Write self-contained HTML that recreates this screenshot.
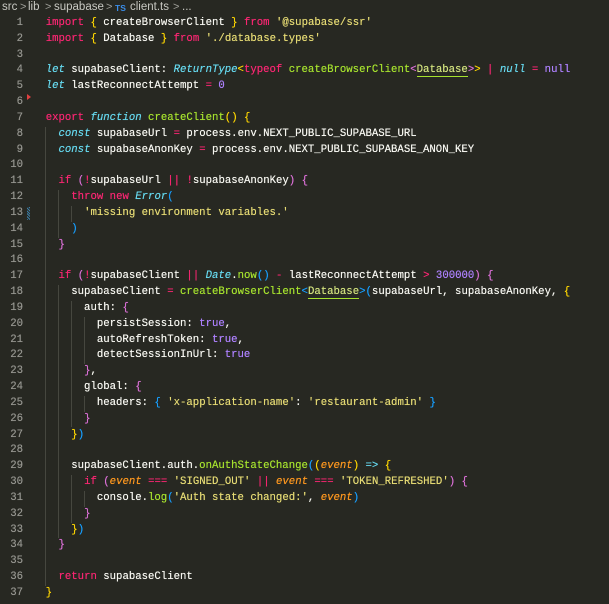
<!DOCTYPE html>
<html><head><meta charset="utf-8">
<style>
html,body{margin:0;padding:0;background:#272822;width:609px;height:604px;overflow:hidden}
.bc{position:absolute;top:0;height:16px;line-height:15px;font-family:"Liberation Sans",sans-serif;font-size:11.5px;color:#c8c8c2;white-space:pre}
.bc.ch{color:#a0a09a;font-size:11px}
.bc.ts{color:#3b8eea;font-weight:bold;font-size:8.5px;line-height:16px}
#code{position:absolute;left:0;top:16px;font-family:"Liberation Mono",monospace;font-size:10.67px;line-height:15.83px;color:#f8f8f2;text-shadow:0 0 0.4px currentColor}
.l{position:relative;height:15.83px;white-space:pre}
.n{position:absolute;left:0;width:23px;text-align:right;color:#95958f}
.c{position:absolute;left:45.7px}
.g{position:absolute;width:1px;background:#46473f}
.k{color:#f92672}.t{color:#66d9ef;font-style:italic}.f{color:#a6e22e}.s{color:#e6db74}.p{color:#ae81ff}.o{color:#fd971f;font-style:italic}
.b1{color:#ffd700}.b2{color:#da70d6}.b3{color:#179fff}
.u{color:#d2e27e;border-bottom:1px solid #a6e22e}
.cy{color:#66d9ef}
</style></head><body>
<div class="bc" style="left:2px">src</div>
<div class="bc ch" style="left:20px">&gt;</div>
<div class="bc" style="left:28px">lib</div>
<div class="bc ch" style="left:45px">&gt;</div>
<div class="bc" style="left:54px">supabase</div>
<div class="bc ch" style="left:106px">&gt;</div>
<div class="bc ts" style="left:115px">TS</div>
<div class="bc" style="left:130px">client.ts</div>
<div class="bc ch" style="left:173px">&gt;</div>
<div class="bc" style="left:182px">...</div>
<div class="g" style="left:45px;top:126.8px;height:458.9px"></div>
<div class="g" style="left:58px;top:190.1px;height:47.5px"></div>
<div class="g" style="left:58px;top:285.1px;height:253.3px"></div>
<div class="g" style="left:71px;top:206px;height:15.8px"></div>
<div class="g" style="left:71px;top:300.9px;height:126.6px"></div>
<div class="g" style="left:71px;top:475px;height:47.5px"></div>
<div class="g" style="left:84px;top:316.7px;height:47.5px"></div>
<div class="g" style="left:84px;top:396px;height:15.8px"></div>
<div class="g" style="left:84px;top:490.8px;height:15.8px"></div>
<div style="position:absolute;left:27px;top:94px;width:0;height:0;border-top:3px solid transparent;border-bottom:3px solid transparent;border-left:4px solid #e04040"></div>
<div style="position:absolute;left:27px;top:207px;width:3px;height:13px;background:repeating-linear-gradient(45deg,#3a7ca5 0 1px,#272822 1px 2px)"></div>
<div id="code">
<div class="l"><span class="n">1</span><span class="c"><span class="k">import</span> <span class="b1">{</span> createBrowserClient <span class="b1">}</span> <span class="k">from</span> <span class="s">'@supabase/ssr'</span></span></div>
<div class="l"><span class="n">2</span><span class="c"><span class="k">import</span> <span class="b1">{</span> Database <span class="b1">}</span> <span class="k">from</span> <span class="s">'./database.types'</span></span></div>
<div class="l"><span class="n">3</span></div>
<div class="l"><span class="n">4</span><span class="c"><span class="t">let</span> supabaseClient: <span class="t">ReturnType</span><span class="b1">&lt;</span><span class="k">typeof</span> <span class="f">createBrowserClient</span><span class="b2">&lt;</span><span class="u">Database</span><span class="b2">&gt;</span><span class="b1">&gt;</span> <span class="k">|</span> <span class="t">null</span> <span class="k">=</span> <span class="p">null</span></span></div>
<div class="l"><span class="n">5</span><span class="c"><span class="t">let</span> lastReconnectAttempt <span class="k">=</span> <span class="p">0</span></span></div>
<div class="l"><span class="n">6</span></div>
<div class="l"><span class="n">7</span><span class="c"><span class="k">export</span> <span class="t">function</span> <span class="f">createClient</span><span class="b1">()</span> <span class="b1">{</span></span></div>
<div class="l"><span class="n">8</span><span class="c">  <span class="t">const</span> supabaseUrl <span class="k">=</span> process.env.NEXT_PUBLIC_SUPABASE_URL</span></div>
<div class="l"><span class="n">9</span><span class="c">  <span class="t">const</span> supabaseAnonKey <span class="k">=</span> process.env.NEXT_PUBLIC_SUPABASE_ANON_KEY</span></div>
<div class="l"><span class="n">10</span></div>
<div class="l"><span class="n">11</span><span class="c">  <span class="k">if</span> <span class="b2">(</span><span class="k">!</span>supabaseUrl <span class="k">||</span> <span class="k">!</span>supabaseAnonKey<span class="b2">)</span> <span class="b2">{</span></span></div>
<div class="l"><span class="n">12</span><span class="c">    <span class="k">throw</span> <span class="k">new</span> <span class="t">Error</span><span class="b3">(</span></span></div>
<div class="l"><span class="n">13</span><span class="c">      <span class="s">'missing environment variables.'</span></span></div>
<div class="l"><span class="n">14</span><span class="c">    <span class="b3">)</span></span></div>
<div class="l"><span class="n">15</span><span class="c">  <span class="b2">}</span></span></div>
<div class="l"><span class="n">16</span></div>
<div class="l"><span class="n">17</span><span class="c">  <span class="k">if</span> <span class="b2">(</span><span class="k">!</span>supabaseClient <span class="k">||</span> <span class="t">Date</span>.<span class="f">now</span><span class="b3">()</span> <span class="k">-</span> lastReconnectAttempt <span class="k">&gt;</span> <span class="p">300000</span><span class="b2">)</span> <span class="b2">{</span></span></div>
<div class="l"><span class="n">18</span><span class="c">    supabaseClient <span class="k">=</span> <span class="f">createBrowserClient</span><span class="b3">&lt;</span><span class="u">Database</span><span class="b3">&gt;</span><span class="b3">(</span>supabaseUrl, supabaseAnonKey, <span class="b1">{</span></span></div>
<div class="l"><span class="n">19</span><span class="c">      auth: <span class="b2">{</span></span></div>
<div class="l"><span class="n">20</span><span class="c">        persistSession: <span class="p">true</span>,</span></div>
<div class="l"><span class="n">21</span><span class="c">        autoRefreshToken: <span class="p">true</span>,</span></div>
<div class="l"><span class="n">22</span><span class="c">        detectSessionInUrl: <span class="p">true</span></span></div>
<div class="l"><span class="n">23</span><span class="c">      <span class="b2">}</span>,</span></div>
<div class="l"><span class="n">24</span><span class="c">      global: <span class="b2">{</span></span></div>
<div class="l"><span class="n">25</span><span class="c">        headers: <span class="b3">{</span> <span class="s">'x-application-name'</span>: <span class="s">'restaurant-admin'</span> <span class="b3">}</span></span></div>
<div class="l"><span class="n">26</span><span class="c">      <span class="b2">}</span></span></div>
<div class="l"><span class="n">27</span><span class="c">    <span class="b1">}</span><span class="b3">)</span></span></div>
<div class="l"><span class="n">28</span></div>
<div class="l"><span class="n">29</span><span class="c">    supabaseClient.auth.<span class="f">onAuthStateChange</span><span class="b3">(</span><span class="b1">(</span><span class="o">event</span><span class="b1">)</span> <span class="cy">=&gt;</span> <span class="b1">{</span></span></div>
<div class="l"><span class="n">30</span><span class="c">      <span class="k">if</span> <span class="b2">(</span><span class="o">event</span> <span class="k">===</span> <span class="s">'SIGNED_OUT'</span> <span class="k">||</span> <span class="o">event</span> <span class="k">===</span> <span class="s">'TOKEN_REFRESHED'</span><span class="b2">)</span> <span class="b2">{</span></span></div>
<div class="l"><span class="n">31</span><span class="c">        console.<span class="f">log</span><span class="b3">(</span><span class="s">'Auth state changed:'</span>, <span class="o">event</span><span class="b3">)</span></span></div>
<div class="l"><span class="n">32</span><span class="c">      <span class="b2">}</span></span></div>
<div class="l"><span class="n">33</span><span class="c">    <span class="b1">}</span><span class="b3">)</span></span></div>
<div class="l"><span class="n">34</span><span class="c">  <span class="b2">}</span></span></div>
<div class="l"><span class="n">35</span></div>
<div class="l"><span class="n">36</span><span class="c">  <span class="k">return</span> supabaseClient</span></div>
<div class="l"><span class="n">37</span><span class="c"><span class="b1">}</span></span></div>
</div>
</body></html>
